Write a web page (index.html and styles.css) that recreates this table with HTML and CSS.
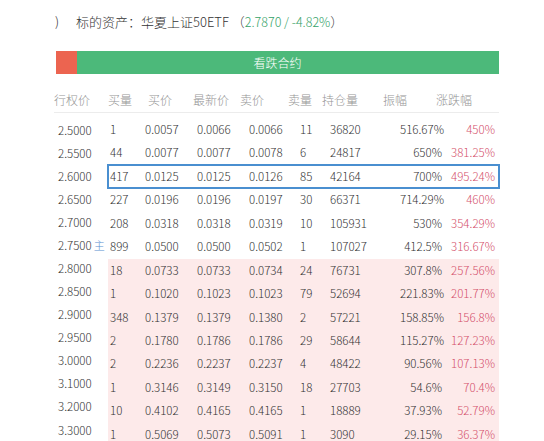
FILE: index.html
```html
<!DOCTYPE html>
<html lang="zh-CN">
<head>
<meta charset="utf-8">
<title>看跌合约</title>
<link rel="stylesheet" href="styles.css">
</head>
<body>
<div class="page">
  <div class="title">
    <span class="paren-l">)</span>
    <span class="label">标的资产：华夏上证50ETF</span>
    <span class="paren">（</span><span class="green">2.7870 / -4.82%</span><span class="paren">）</span>
  </div>

  <div class="bar">
    <div class="bar-red"></div>
    <div class="bar-title">看跌合约</div>
  </div>

  <div class="head">
    <span>行权价</span><span>买量</span><span>买价</span><span>最新价</span><span>卖价</span><span>卖量</span><span>持仓量</span><span>振幅</span><span>涨跌幅</span>
  </div>

  <div class="body">
    <div class="strikes">
      <div class="strike">2.5000</div>
      <div class="strike">2.5500</div>
      <div class="strike">2.6000</div>
      <div class="strike">2.6500</div>
      <div class="strike">2.7000</div>
      <div class="strike">2.7500<span class="main">主</span></div>
      <div class="strike">2.8000</div>
      <div class="strike">2.8500</div>
      <div class="strike">2.9000</div>
      <div class="strike">2.9500</div>
      <div class="strike">3.0000</div>
      <div class="strike">3.1000</div>
      <div class="strike">3.2000</div>
      <div class="strike">3.3000</div>
    </div>
    <div class="rows">
      <div class="row"><span>1</span><span>0.0057</span><span>0.0066</span><span>0.0066</span><span>11</span><span>36820</span><span class="r">516.67%</span><span class="r red">450%</span></div>
      <div class="row"><span>44</span><span>0.0077</span><span>0.0077</span><span>0.0078</span><span>6</span><span>24817</span><span class="r">650%</span><span class="r red">381.25%</span></div>
      <div class="row selected"><span>417</span><span>0.0125</span><span>0.0125</span><span>0.0126</span><span>85</span><span>42164</span><span class="r">700%</span><span class="r red">495.24%</span></div>
      <div class="row"><span>227</span><span>0.0196</span><span>0.0196</span><span>0.0197</span><span>30</span><span>66371</span><span class="r">714.29%</span><span class="r red">460%</span></div>
      <div class="row"><span>208</span><span>0.0318</span><span>0.0318</span><span>0.0319</span><span>10</span><span>105931</span><span class="r">530%</span><span class="r red">354.29%</span></div>
      <div class="row"><span>899</span><span>0.0500</span><span>0.0500</span><span>0.0502</span><span>1</span><span>107027</span><span class="r">412.5%</span><span class="r red">316.67%</span></div>
      <div class="row itm"><span>18</span><span>0.0733</span><span>0.0733</span><span>0.0734</span><span>24</span><span>76731</span><span class="r">307.8%</span><span class="r red">257.56%</span></div>
      <div class="row itm"><span>1</span><span>0.1020</span><span>0.1023</span><span>0.1023</span><span>79</span><span>52694</span><span class="r">221.83%</span><span class="r red">201.77%</span></div>
      <div class="row itm"><span>348</span><span>0.1379</span><span>0.1379</span><span>0.1380</span><span>2</span><span>57221</span><span class="r">158.85%</span><span class="r red">156.8%</span></div>
      <div class="row itm"><span>2</span><span>0.1780</span><span>0.1786</span><span>0.1786</span><span>29</span><span>58644</span><span class="r">115.27%</span><span class="r red">127.23%</span></div>
      <div class="row itm"><span>2</span><span>0.2236</span><span>0.2237</span><span>0.2237</span><span>4</span><span>48422</span><span class="r">90.56%</span><span class="r red">107.13%</span></div>
      <div class="row itm"><span>1</span><span>0.3146</span><span>0.3149</span><span>0.3150</span><span>18</span><span>27703</span><span class="r">54.6%</span><span class="r red">70.4%</span></div>
      <div class="row itm"><span>10</span><span>0.4102</span><span>0.4165</span><span>0.4165</span><span>1</span><span>18889</span><span class="r">37.93%</span><span class="r red">52.79%</span></div>
      <div class="row itm"><span>1</span><span>0.5069</span><span>0.5073</span><span>0.5091</span><span>1</span><span>3090</span><span class="r">29.15%</span><span class="r red">36.37%</span></div>
    </div>
  </div>
</div>
</body>
</html>
```

FILE: styles.css
```css
html, body {
  margin: 0;
  padding: 0;
  background: #ffffff;
}

body {
  font-family: "Noto Sans CJK SC", "Noto Sans", sans-serif;
  font-size: 12px;
  font-weight: 300;
  color: #333333;
  overflow: hidden;
}

.page {
  padding-top: 12px;
}

.title {
  height: 20px;
  line-height: 20px;
  font-size: 13px;
  padding-left: 55px;
  white-space: nowrap;
  color: #333;
}

.paren-l {
  margin-right: 14px;
}

.paren {
  color: #444;
}

.green {
  color: #35a268;
  font-size: 12.5px;
}

.bar {
  margin-top: 19px;
  margin-left: 56px;
  width: 443px;
  height: 23px;
  display: flex;
  background: #4cb97a;
}

.bar-red {
  width: 21px;
  background: #ec6450;
}

.bar-title {
  flex: 1;
  text-align: center;
  line-height: 23px;
  color: #ffffff;
  padding-right: 21px;
}

.head {
  margin-left: 54px;
  width: 445px;
  padding-top: 16px;
  padding-bottom: 2px;
  line-height: 20px;
  display: grid;
  grid-template-columns: 54px 40px 45px 47px 48px 34px 61px 53px 1fr;
  color: #959595;
  border-bottom: 1px solid #ececec;
  white-space: nowrap;
}

.body {
  display: flex;
  padding-top: 5px;
  margin-left: 54px;
  font-size: 11.5px;
}

.strikes {
  width: 54px;
  padding-top: 0.5px;
}

.strike {
  height: 23.08px;
  line-height: 23.08px;
  padding-left: 4px;
  white-space: nowrap;
}

.main {
  color: #5b8fd0;
  font-size: 11px;
  margin-left: 2px;
}

.rows {
  width: 391px;
}

.row {
  display: grid;
  grid-template-columns: 35px 52px 52px 51px 30px 72px 42px 57px;
  height: 23.45px;
  line-height: 23.45px;
  white-space: nowrap;
}

.row span {
  padding-left: 2px;
}

.row .r {
  text-align: right;
  padding-left: 0;
}

.row .r:last-child {
  padding-right: 4px;
}

.red {
  color: #d4506a;
}

.itm {
  background: #fdeaea;
}

.selected {
  outline: 2px solid #4a8fd0;
  outline-offset: -1px;
}
```
